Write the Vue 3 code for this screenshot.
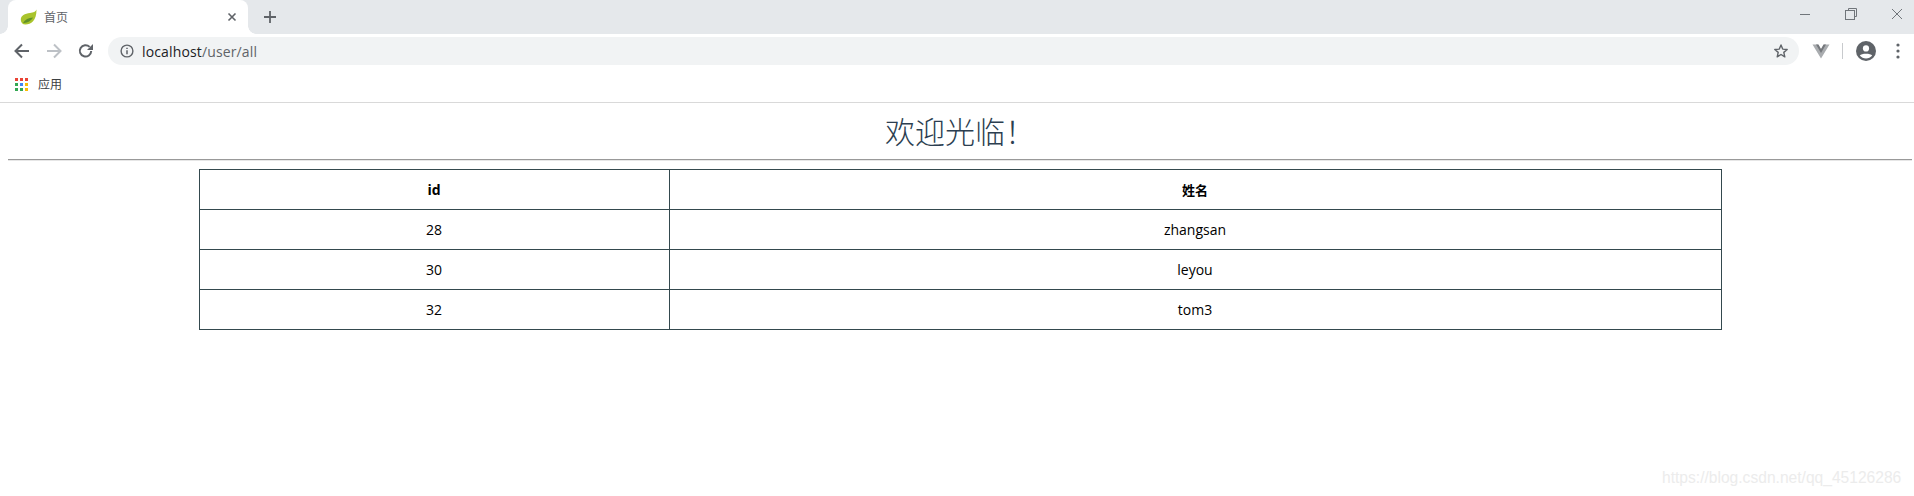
<script setup>
const rows = [
  { id: 28, name: 'zhangsan' },
  { id: 30, name: 'leyou' },
  { id: 32, name: 'tom3' }
]
const appColors = ['#ea4335', '#ea4335', '#ea4335', '#34a853', '#4285f4', '#fbbc05', '#34a853', '#34a853', '#fbbc05']
</script>

<template>
  <div class="window">
    <div class="tabstrip">
      <div class="tab">
        <svg class="favicon" width="17" height="16" viewBox="0 0 17 16">
          <path d="M16.5 0.5C15.5 3 13.5 3.5 10 4C5 4.6 0.5 6.5 0.8 11C1 13.5 2.5 15.5 5.5 15.5C11 15.5 16.5 12 16.5 0.5Z" fill="#a9c42c" />
          <path d="M3 14C5 10.5 8.5 9 13 8.6C11 12 7 14.5 3 14Z" fill="#5f9128" />
        </svg>
        <span class="tab-title">首页</span>
        <svg class="tab-close" width="10" height="10" viewBox="0 0 10 10">
          <path d="M1.5 1.5L8.5 8.5M8.5 1.5L1.5 8.5" stroke="#5f6368" stroke-width="1.6" fill="none" />
        </svg>
      </div>
      <svg class="new-tab" width="14" height="14" viewBox="0 0 14 14">
        <path d="M7 1V13M1 7H13" stroke="#5f6368" stroke-width="1.8" fill="none" />
      </svg>
      <div class="win-controls">
        <svg width="12" height="12" viewBox="0 0 12 12"><path d="M1 6.5H11" stroke="#70757a" stroke-width="1" /></svg>
        <svg width="12" height="12" viewBox="0 0 12 12" fill="none" stroke="#70757a"><path d="M3.5 2.5V0.5H11.5V8.5H9.5" /><rect x="0.5" y="2.5" width="9" height="9" /></svg>
        <svg width="12" height="12" viewBox="0 0 12 12"><path d="M1 1L11 11M11 1L1 11" stroke="#70757a" stroke-width="1" fill="none" /></svg>
      </div>
    </div>

    <div class="toolbar">
      <svg class="nav" width="16" height="16" viewBox="0 0 16 16" fill="none" stroke="#5f6368" stroke-width="2">
        <path d="M15 8H2M8 1.5L1.5 8L8 14.5" />
      </svg>
      <svg class="nav" width="16" height="16" viewBox="0 0 16 16" fill="none" stroke="#bdc1c6" stroke-width="2">
        <path d="M1 8H14M8 1.5L14.5 8L8 14.5" />
      </svg>
      <svg class="nav" width="16" height="16" viewBox="0 0 16 16">
        <path d="M13.2 8A5.7 5.7 0 1 1 11.6 3.9" fill="none" stroke="#5f6368" stroke-width="2" />
        <path d="M15 1V7H9Z" fill="#5f6368" />
      </svg>
      <div class="omnibox">
        <svg width="14" height="14" viewBox="0 0 14 14" fill="none">
          <circle cx="7" cy="7" r="5.9" stroke="#5f6368" stroke-width="1.4" />
          <path d="M7 6.2V10.3M7 3.7V5.1" stroke="#5f6368" stroke-width="1.5" />
        </svg>
        <span class="url"><span class="host">localhost</span>/user/all</span>
        <svg class="star" width="16" height="16" viewBox="0 0 16 16">
          <path d="M8 2L9.7 6.1L14.2 6.5L10.8 9.4L11.8 13.8L8 11.5L4.2 13.8L5.2 9.4L1.8 6.5L6.3 6.1Z" fill="none" stroke="#5f6368" stroke-width="1.4" stroke-linejoin="round" />
        </svg>
      </div>
      <svg class="ext" width="18" height="15" viewBox="0 0 18 15">
        <path d="M0.5 0.5H6L9 5.5L12 0.5H17.5L9 14.5Z" fill="#a9acaf" />
        <path d="M4 0.5H6.5L9 5L11.5 0.5H14L9 9Z" fill="#75787c" />
      </svg>
      <div class="sep"></div>
      <svg class="profile" width="20" height="20" viewBox="0 0 20 20">
        <circle cx="10" cy="10" r="10" fill="#5f6368" />
        <circle cx="10" cy="7.4" r="3.1" fill="#fff" />
        <path d="M3.8 14.6C5.5 12.2 14.5 12.2 16.2 14.6C14.6 16.6 12.4 17.4 10 17.4C7.6 17.4 5.4 16.6 3.8 14.6Z" fill="#fff" />
      </svg>
      <svg class="menu" width="4" height="16" viewBox="0 0 4 16" fill="#5f6368">
        <circle cx="2" cy="2" r="1.6" />
        <circle cx="2" cy="8" r="1.6" />
        <circle cx="2" cy="14" r="1.6" />
      </svg>
    </div>

    <div class="bookmarks">
      <div class="apps">
        <i v-for="(c, i) in appColors" :key="i" :style="{ background: c }"></i>
      </div>
      <span class="bm-label">应用</span>
    </div>

    <main class="page">
      <h1>欢迎光临！</h1>
      <hr />
      <table>
        <thead>
          <tr>
            <th class="col-id">id</th>
            <th>姓名</th>
          </tr>
        </thead>
        <tbody>
          <tr v-for="r in rows" :key="r.id">
            <td>{{ r.id }}</td>
            <td>{{ r.name }}</td>
          </tr>
        </tbody>
      </table>
    </main>

    <div class="watermark">https://blog.csdn.net/qq_45126286</div>
  </div>
</template>

<style scoped>
.window {
  position: relative;
  width: 1914px;
  height: 496px;
  overflow: hidden;
  background: #fff;
  font-family: "Open Sans", "Noto Sans CJK SC", sans-serif;
}
.tabstrip {
  height: 34px;
  background: #e5e8eb;
  display: flex;
  align-items: center;
  padding-left: 8px;
}
.tab {
  position: relative;
  width: 240px;
  height: 34px;
  background: #fff;
  border-radius: 8px 8px 0 0;
  display: flex;
  align-items: center;
  padding: 0 12px;
  box-sizing: border-box;
}
.tab::before,
.tab::after {
  content: "";
  position: absolute;
  bottom: 0;
  width: 8px;
  height: 8px;
}
.tab::before {
  left: -8px;
  background: radial-gradient(circle at 0 0, #e5e8eb 7.5px, #fff 8px);
}
.tab::after {
  right: -8px;
  background: radial-gradient(circle at 100% 0, #e5e8eb 7.5px, #fff 8px);
}
.favicon {
  flex: none;
}
.tab-title {
  margin-left: 7px;
  font-size: 12px;
  color: #5f6368;
  flex: 1;
}
.tab-close {
  margin-right: -1px;
}
.new-tab {
  margin-left: 15px;
}
.win-controls {
  margin-left: auto;
  display: flex;
  gap: 34px;
  padding-right: 11px;
  margin-top: -6px;
}
.toolbar {
  height: 34px;
  display: flex;
  align-items: center;
  padding-left: 14px;
}
.nav {
  flex: none;
  margin-right: 16px;
}
.omnibox {
  width: 1691px;
  height: 28px;
  margin-left: -2px;
  flex: none;
  border-radius: 14px;
  background: #f1f3f4;
  display: flex;
  align-items: center;
  padding: 0 12px;
  box-sizing: border-box;
}
.url {
  margin-left: 8px;
  font-size: 14px;
  letter-spacing: 0.14px;
  color: #5f6368;
  flex: 1;
}
.host {
  color: #202124;
}
.star {
  margin-right: -2px;
}
.ext {
  margin-left: 13px;
  flex: none;
}
.sep {
  width: 1px;
  height: 16px;
  background: #c8cacd;
  margin-left: 12px;
  flex: none;
}
.profile {
  margin-left: 13px;
  flex: none;
}
.menu {
  margin-left: 20px;
  flex: none;
}
.bookmarks {
  height: 32px;
  padding-bottom: 2px;
  border-bottom: 1px solid #d9d9d9;
  display: flex;
  align-items: center;
  padding-left: 15px;
}
.apps {
  display: grid;
  grid-template-columns: repeat(3, 3px);
  grid-auto-rows: 3px;
  gap: 2px;
}
.apps i {
  display: block;
}
.bm-label {
  margin-left: 10px;
  font-size: 12px;
  color: #3c4043;
}
.page {
  padding: 0 2px 0 8px;
}
h1 {
  margin: 0;
  height: 56px;
  line-height: 54px;
  font-size: 30px;
  font-weight: 300;
  text-align: center;
  color: #2c3e50;
  font-family: "Noto Sans CJK SC", sans-serif;
}
hr {
  margin: 0;
  border: 0;
  height: 1px;
  background: #999;
  box-shadow: 0 1px 0 #e6e6e6;
}
table {
  margin: 9px auto 0;
  width: 1523px;
  height: 161px;
  border-collapse: collapse;
  table-layout: fixed;
  font-size: 14px;
  color: #000;
}
th,
td {
  border: 1px solid #34494e;
  text-align: center;
  padding: 0;
  height: 39px;
}
th {
  font-size: 14px;
  font-weight: 700;
}
th:last-child {
  font-size: 13px;
}
.col-id {
  width: 469px;
}
.watermark {
  position: absolute;
  left: 1662px;
  top: 469px;
  font-family: "Liberation Sans", sans-serif;
  font-size: 15.6px;
  color: #ececec;
  white-space: nowrap;
}
</style>
